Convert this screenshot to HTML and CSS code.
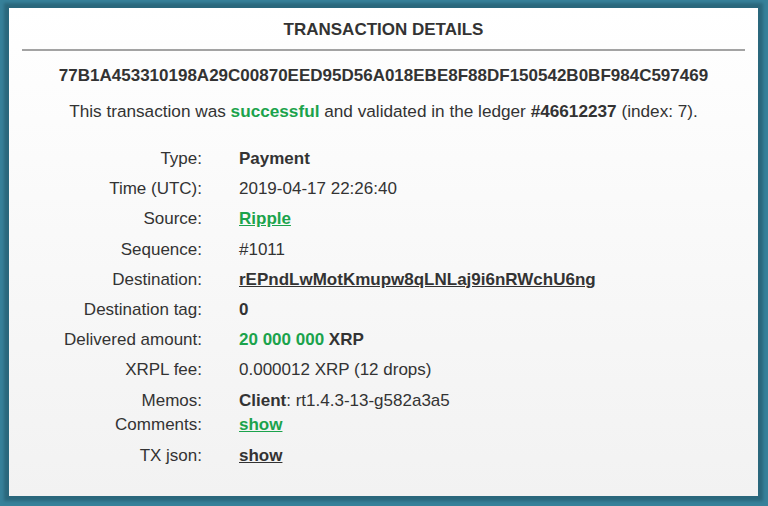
FILE: index.html
```html
<!DOCTYPE html>
<html>
<head>
<meta charset="utf-8">
<title>Transaction details</title>
<link rel="stylesheet" href="styles.css">
</head>
<body>
<div class="card">
  <div class="title">TRANSACTION DETAILS</div>
  <div class="hash">77B1A453310198A29C00870EED95D56A018EBE8F88DF150542B0BF984C597469</div>
  <div class="summary">This transaction was <b class="green">successful</b> and validated in the ledger <b>#46612237</b> (index: 7).</div>
  <div class="details">
    <div class="label">Type:</div><div class="value"><b>Payment</b></div>
    <div class="label">Time (UTC):</div><div class="value">2019-04-17 22:26:40</div>
    <div class="label">Source:</div><div class="value"><a class="link green" href="#">Ripple</a></div>
    <div class="label">Sequence:</div><div class="value">#1011</div>
    <div class="label">Destination:</div><div class="value"><a class="link" href="#">rEPndLwMotKmupw8qLNLaj9i6nRWchU6ng</a></div>
    <div class="label">Destination tag:</div><div class="value"><b>0</b></div>
    <div class="label">Delivered amount:</div><div class="value"><b class="green">20 000 000</b> <b>XRP</b></div>
    <div class="label">XRPL fee:</div><div class="value">0.000012 XRP (12 drops)</div>
    <div class="label memo">Memos:</div><div class="value memo"><b>Client</b>: rt1.4.3-13-g582a3a5</div>
    <div class="label comments">Comments:</div><div class="value comments"><a class="link green" href="#">show</a></div>
    <div class="label json">TX json:</div><div class="value json"><a class="link" href="#">show</a></div>
  </div>
</div>
</body>
</html>
```
FILE: styles.css
```css
html, body {
  margin: 0;
  height: 100%;
}
body {
  background: #37819a;
  padding: 8px 10px 10px 9px;
  box-sizing: border-box;
  font-family: "Liberation Sans", Arial, sans-serif;
  color: #333;
}
.card {
  width: 749px;
  height: 488px;
  background: linear-gradient(#ffffff, #f2f2f2);
  box-shadow: 0 0 3px 5px #2a677c;
  box-sizing: border-box;
}
.title {
  margin: 0 13px;
  padding: 12px 0 9px;
  line-height: 20px;
  font-size: 17px;
  font-weight: bold;
  text-align: center;
  border-bottom: 2px solid #a3a3a3;
}
.hash {
  margin-top: 15px;
  line-height: 20px;
  font-size: 17px;
  font-weight: bold;
  text-align: center;
}
.summary {
  margin-top: 15px;
  line-height: 20px;
  font-size: 17.2px;
  text-align: center;
}
.green {
  color: #1ba34c;
}
.details {
  margin-top: 23px;
  display: grid;
  grid-template-columns: 193px auto;
  column-gap: 37px;
  font-size: 17px;
  line-height: 20px;
}
.label {
  text-align: right;
  padding: 5px 0 5.2px;
}
.value {
  padding: 5px 0 5.2px;
}
.memo {
  padding-bottom: 0;
}
.comments {
  padding-top: 4px;
}
.json {
  padding-top: 6px;
}
.link {
  font-weight: bold;
  color: #333;
  text-decoration: underline;
}
.link.green {
  color: #1ba34c;
}
```
